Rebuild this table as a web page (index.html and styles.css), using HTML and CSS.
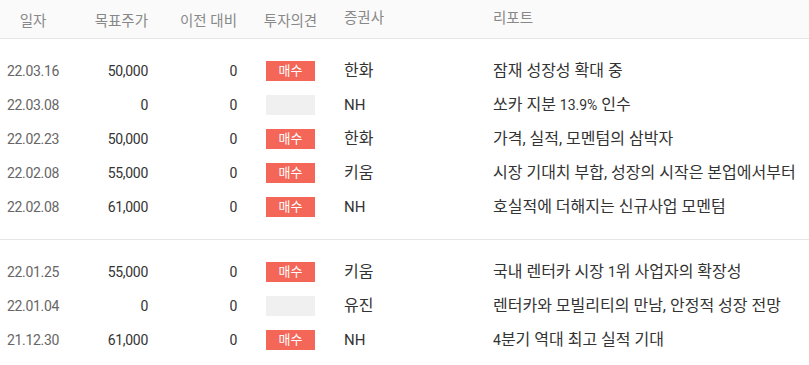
FILE: index.html
```html
<!DOCTYPE html>
<html lang="ko">
<head>
<meta charset="utf-8">
<title>리포트</title>
<link rel="stylesheet" href="styles.css">
</head>
<body>
<div class="table">
  <div class="row head">
    <div class="c date">일자</div>
    <div class="c num">목표주가</div>
    <div class="c num">이전 대비</div>
    <div class="c op">투자의견</div>
    <div class="c firm">증권사</div>
    <div class="c rep">리포트</div>
  </div>
  <div class="group">
    <div class="row">
      <div class="c date">22.03.16</div><div class="c num">50,000</div><div class="c num">0</div>
      <div class="c op"><span class="badge buy">매수</span></div><div class="c firm">한화</div><div class="c rep">잠재 성장성 확대 중</div>
    </div>
    <div class="row">
      <div class="c date">22.03.08</div><div class="c num">0</div><div class="c num">0</div>
      <div class="c op"><span class="badge none"></span></div><div class="c firm"><span class="lat">NH</span></div><div class="c rep">쏘카 지분 <span class="lat">13.9%</span> 인수</div>
    </div>
    <div class="row">
      <div class="c date">22.02.23</div><div class="c num">50,000</div><div class="c num">0</div>
      <div class="c op"><span class="badge buy">매수</span></div><div class="c firm">한화</div><div class="c rep">가격, 실적, 모멘텀의 삼박자</div>
    </div>
    <div class="row">
      <div class="c date">22.02.08</div><div class="c num">55,000</div><div class="c num">0</div>
      <div class="c op"><span class="badge buy">매수</span></div><div class="c firm">키움</div><div class="c rep">시장 기대치 부합, 성장의 시작은 본업에서부터</div>
    </div>
    <div class="row">
      <div class="c date">22.02.08</div><div class="c num">61,000</div><div class="c num">0</div>
      <div class="c op"><span class="badge buy">매수</span></div><div class="c firm"><span class="lat">NH</span></div><div class="c rep">호실적에 더해지는 신규사업 모멘텀</div>
    </div>
  </div>
  <div class="group">
    <div class="row">
      <div class="c date">22.01.25</div><div class="c num">55,000</div><div class="c num">0</div>
      <div class="c op"><span class="badge buy">매수</span></div><div class="c firm">키움</div><div class="c rep">국내 렌터카 시장 <span class="lat">1</span>위 사업자의 확장성</div>
    </div>
    <div class="row">
      <div class="c date">22.01.04</div><div class="c num">0</div><div class="c num">0</div>
      <div class="c op"><span class="badge none"></span></div><div class="c firm">유진</div><div class="c rep">렌터카와 모빌리티의 만남, 안정적 성장 전망</div>
    </div>
    <div class="row">
      <div class="c date">21.12.30</div><div class="c num">61,000</div><div class="c num">0</div>
      <div class="c op"><span class="badge buy">매수</span></div><div class="c firm"><span class="lat">NH</span></div><div class="c rep"><span class="lat">4</span>분기 역대 최고 실적 기대</div>
    </div>
  </div>
</div>
</body>
</html>
```

FILE: styles.css
```css
html, body {
  margin: 0;
  padding: 0;
  background: #fff;
}
body {
  font-family: Roboto, "Noto Sans CJK KR", sans-serif;
  font-size: 14px;
  color: #333;
  overflow: hidden;
}
.table {
  width: 809px;
}
.row {
  display: grid;
  grid-template-columns: 66px 92px 89px 87px 149px 1fr;
  align-items: center;
  height: 34px;
}
.row.head {
  height: 38px;
  background: #fafafa;
  border-bottom: 1px solid #e6e6e6;
  color: #888;
  font-size: 14.5px;
}
.group {
  padding: 15px 0;
}
.group + .group {
  border-top: 1px solid #e6e6e6;
}
.c {
  white-space: nowrap;
}
.date {
  text-align: center;
  color: #666;
  letter-spacing: -0.3px;
}
.num {
  text-align: right;
  padding-right: 10px;
  letter-spacing: -0.3px;
  color: #333;
}
.head .date,
.head .num {
  letter-spacing: 0;
  color: #888;
}
.op {
  display: flex;
  justify-content: center;
}
.firm, .rep {
  padding-left: 10px;
  font-size: 16px;
  line-height: 20px;
}
.head .firm,
.head .rep {
  font-size: 14.5px;
}
.lat {
  font-size: 15px;
}
.rep .lat {
  font-size: 14px;
}
.badge {
  display: block;
  width: 49px;
  height: 20px;
  line-height: 20px;
  font-size: 13px;
  text-align: center;
}
.badge.buy {
  background: #f46658;
  color: #fff;
}
.badge.none {
  background: #f0f0f0;
}
```
